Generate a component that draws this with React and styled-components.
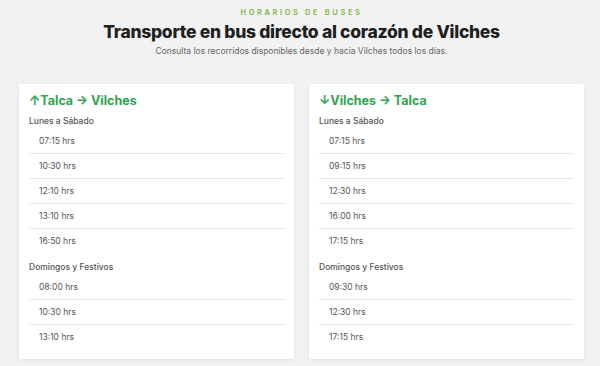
import styled, { createGlobalStyle } from "styled-components";

const GlobalStyle = createGlobalStyle`
  body {
    margin: 0;
    background: #f2f2f2;
    font-family: Inter, "Noto Sans", sans-serif;
  }
`;

const Page = styled.main`
  padding: 8px 16px 8px 19px;
`;

const Header = styled.header`
  text-align: center;
  margin-bottom: 27px;
`;

const Eyebrow = styled.div`
  font-size: 7.5px;
  font-weight: 600;
  letter-spacing: 2.6px;
  color: #7fb544;
  line-height: 10px;
`;

const Title = styled.h1`
  margin: 3px 0 0;
  font-size: 17.5px;
  font-weight: 800;
  line-height: 22px;
  color: #1f1f1f;
  letter-spacing: -0.3px;
`;

const Subtitle = styled.p`
  margin: 2px 0 0;
  font-size: 8.5px;
  line-height: 12px;
  color: #666;
`;

const Grid = styled.div`
  display: grid;
  grid-template-columns: 275px 275px;
  gap: 15px;
`;

const Card = styled.section`
  background: #fff;
  border-radius: 2px;
  box-shadow: 0 1px 4px rgba(0, 0, 0, 0.08);
  padding: 9px 10px 10px;
`;

const CardTitle = styled.h2`
  margin: 0;
  font-size: 12.5px;
  font-weight: 700;
  line-height: 16px;
  color: #2ea44f;
`;

const Section = styled.div`
  margin-top: ${(p) => (p.$first ? "6px" : "8px")};
`;

const Day = styled.h3`
  margin: 0 0 2px;
  font-size: 8.5px;
  font-weight: 500;
  line-height: 12px;
  color: #555;
`;

const List = styled.ul`
  list-style: none;
  margin: 0;
  padding: 0;
`;

const Row = styled.li`
  height: 24px;
  display: flex;
  align-items: center;
  padding-left: 10px;
  font-size: 8.5px;
  color: #555;
  border-bottom: 1px solid #e6e6e6;

  &:last-child {
    border-bottom: none;
  }
`;

const routes = [
  {
    title: "↑Talca → Vilches",
    sections: [
      { day: "Lunes a Sábado", times: ["07:15", "10:30", "12:10", "13:10", "16:50"] },
      { day: "Domingos y Festivos", times: ["08:00", "10:30", "13:10"] },
    ],
  },
  {
    title: "↓Vilches → Talca",
    sections: [
      { day: "Lunes a Sábado", times: ["07:15", "09:15", "12:30", "16:00", "17:15"] },
      { day: "Domingos y Festivos", times: ["09:30", "12:30", "17:15"] },
    ],
  },
];

export default function App() {
  return (
    <Page>
      <GlobalStyle />
      <Header>
        <Eyebrow>HORARIOS DE BUSES</Eyebrow>
        <Title>Transporte en bus directo al corazón de Vilches</Title>
        <Subtitle>Consulta los recorridos disponibles desde y hacia Vilches todos los días.</Subtitle>
      </Header>
      <Grid>
        {routes.map((r) => (
          <Card key={r.title}>
            <CardTitle>{r.title}</CardTitle>
            {r.sections.map((s, i) => (
              <Section key={s.day} $first={i === 0}>
                <Day>{s.day}</Day>
                <List>
                  {s.times.map((t) => (
                    <Row key={t}>{t} hrs</Row>
                  ))}
                </List>
              </Section>
            ))}
          </Card>
        ))}
      </Grid>
    </Page>
  );
}
